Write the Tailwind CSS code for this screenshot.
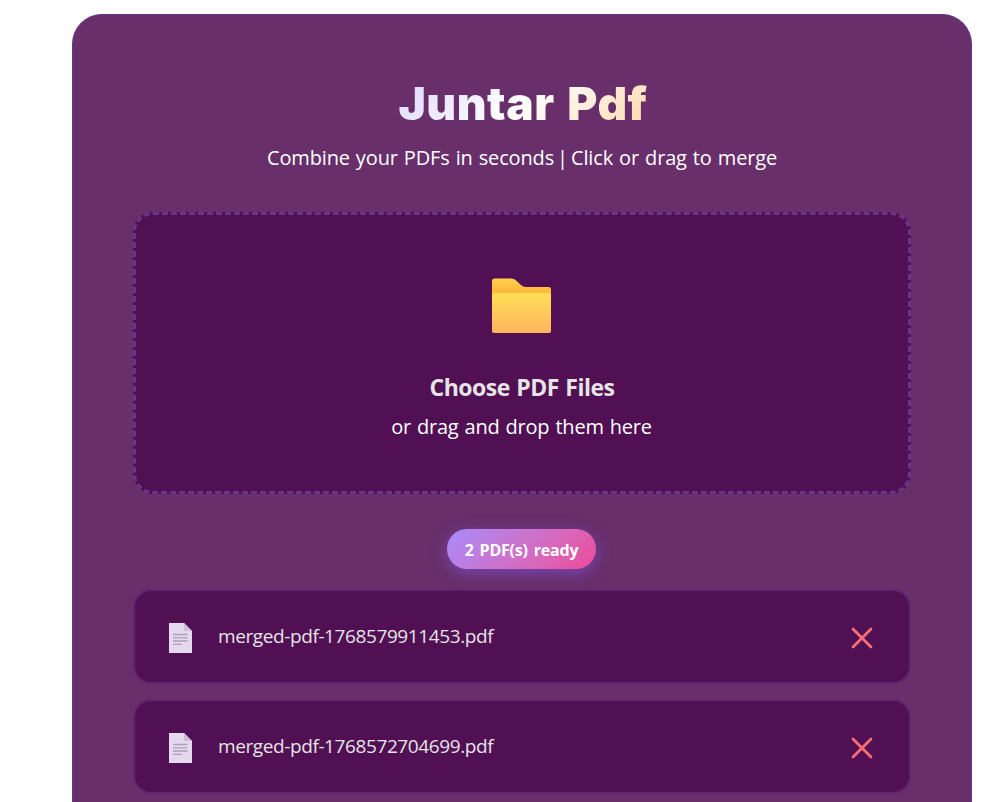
<!DOCTYPE html>
<html lang="en">
<head>
    <meta charset="UTF-8">
    <meta name="viewport" content="width=device-width, initial-scale=1.0">
    <title>Juntar Pdf</title>
    <script src="https://cdn.jsdelivr.net/npm/@tailwindcss/browser@4"></script>
</head>
<body class="bg-white h-screen overflow-hidden font-['Open_Sans','Noto_Sans',sans-serif]">
    <main class="ml-[72px] mt-[14px] w-[900px] h-[788px] px-[60px] pt-[60px] rounded-t-[30px] border border-b-0 border-[#683487] bg-[#682f6b] flex flex-col">
        <!-- Header -->
        <h1 class="h-[56px] leading-[56px] pl-[2px] text-center text-[46px] font-black whitespace-nowrap font-['Inter',sans-serif]"><span class="inline-block tracking-[0.5px] [word-spacing:3px] bg-linear-135 from-[#ddd6fe] via-white to-[#fed7aa] bg-clip-text text-transparent">Juntar Pdf</span></h1>
        <p class="mt-[11px] mb-px h-[32px] leading-[32px] text-center text-[20px] tracking-[-0.15px] [word-spacing:1px] text-white whitespace-nowrap">Combine your PDFs in seconds<span class="[word-spacing:-2px]"> | </span>Click or drag to merge</p>

        <!-- Drop zone -->
        <section class="mt-[37px] h-[282px] shrink-0 rounded-[20px] border-3 border-dashed border-[#683487] bg-[#510f54] flex flex-col items-center">
            <svg class="mt-[63px] mr-px w-[60px] h-[56px]" viewBox="0 0 60 56">
                <defs>
                    <linearGradient id="folderBack" x1="0" y1="0" x2="0" y2="1">
                        <stop offset="0" stop-color="#ffcf4d"/>
                        <stop offset=".3" stop-color="#ffb63a"/>
                    </linearGradient>
                    <linearGradient id="folderFront" x1="0" y1="0" x2="0" y2="1">
                        <stop offset="0" stop-color="#ffdf54"/>
                        <stop offset="1" stop-color="#ffb45f"/>
                    </linearGradient>
                </defs>
                <path fill="url(#folderBack)" d="M2.500 .5H19.500Q22 .5 23.500 2L29 7Q31 9 34 9H56.500Q59 9 59 11.500V52H0V3Q0 .5 2.500 .5Z"/>
                <rect x="0" y="15" width="59" height="40" rx="2" fill="url(#folderFront)"/>
            </svg>
            <h3 class="mt-[36px] mb-px h-[34px] leading-[34px] text-[23px] tracking-[-0.5px] [word-spacing:1px] font-bold text-[#e5e5e5] whitespace-nowrap">Choose PDF Files</h3>
            <p class="mt-[6px] mr-px h-[32px] leading-[32px] text-[20px] tracking-[-0.2px] [word-spacing:1px] text-white whitespace-nowrap">or drag and drop them here</p>
        </section>

        <!-- File counter -->
        <div class="mt-[35px] mr-px pt-[2px] self-center w-[149px] h-[40px] shrink-0 rounded-full bg-linear-135 from-[#a78bfa] to-[#ec4899] shadow-[0_4px_15px_rgba(139,92,246,0.5)] flex items-center justify-center text-[16px] tracking-[-0.2px] [word-spacing:2px] font-bold text-white whitespace-nowrap"><span>2 PDF(s) ready</span></div>

        <!-- File list -->
        <ul class="mt-5 flex flex-col gap-[15px]">
            <li class="h-[95px] shrink-0 pl-[34px] pr-[36px] rounded-[18px] border-2 border-[#5f2672] bg-[#510f54] flex items-center">
                <svg class="w-[23px] h-[30px] mt-[2px]" viewBox="0 0 23 30">
                    <path fill="#e5d9f0" d="M0 0H15L23 8V30H0Z"/>
                    <path fill="#c8c0cf" d="M15 0L23 8H15Z"/>
                    <path stroke="#a9a0b3" stroke-width="1.300" d="M4 11.500H18.500M4 14.800H18.500M4 18H18.500M4 21.300H13"/>
                </svg>
                <span class="ml-[26px] flex-1 text-[19px] tracking-[-0.4px] text-[#e5e5e5] whitespace-nowrap"><span>merged-pdf-1768579911453.pdf</span></span>
                <svg class="w-[22px] h-[22px] mt-[3px]" viewBox="0 0 22 22" fill="none" stroke="#f87171" stroke-width="2.800" stroke-linecap="round">
                    <path d="M2 2L20 20M20 2L2 20"/>
                </svg>
            </li>
            <li class="h-[95px] shrink-0 pl-[34px] pr-[36px] rounded-[18px] border-2 border-[#5f2672] bg-[#510f54] flex items-center">
                <svg class="w-[23px] h-[30px] mt-[2px]" viewBox="0 0 23 30">
                    <path fill="#e5d9f0" d="M0 0H15L23 8V30H0Z"/>
                    <path fill="#c8c0cf" d="M15 0L23 8H15Z"/>
                    <path stroke="#a9a0b3" stroke-width="1.300" d="M4 11.500H18.500M4 14.800H18.500M4 18H18.500M4 21.300H13"/>
                </svg>
                <span class="ml-[26px] flex-1 text-[19px] tracking-[-0.4px] text-[#e5e5e5] whitespace-nowrap"><span>merged-pdf-1768572704699.pdf</span></span>
                <svg class="w-[22px] h-[22px] mt-[3px]" viewBox="0 0 22 22" fill="none" stroke="#f87171" stroke-width="2.800" stroke-linecap="round">
                    <path d="M2 2L20 20M20 2L2 20"/>
                </svg>
            </li>
        </ul>
    </main>
</body>
</html>
